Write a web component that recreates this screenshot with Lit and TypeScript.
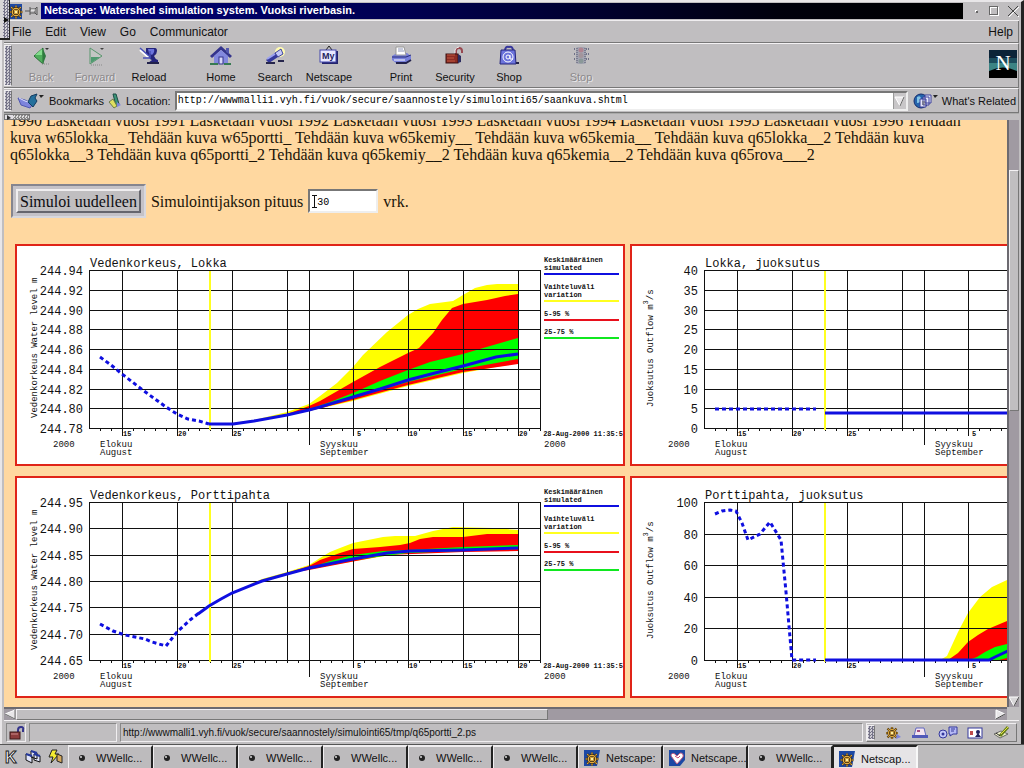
import { LitElement, html, svg, css } from "lit";
import { customElement, property } from "lit/decorators.js";

type Pt = [number, number];

interface ChartSpec {
  title: string;
  unit: string;
  cubic?: boolean;
  ticks: string[];
  observed: Pt[];
  simulated: Pt[];
  yellow?: Pt[];
  red?: Pt[];
  green?: Pt[];
}

const LEFT = 89;
const RIGHT = 540;
const TOP = 270;
const BOTTOM = 428;
const DAY = 11;

const pts = (list: Pt[]) => list.map((p) => p.join(",")).join(" ");

const CHARTS: ChartSpec[] = [
  {
    title: "Vedenkorkeus, Lokka",
    unit: "Vedenkorkeus Water level m",
    ticks: ["244.94", "244.92", "244.90", "244.88", "244.86", "244.84", "244.82", "244.80", "244.78"],
    observed: [[100, 357], [111, 365], [122, 374], [144, 391], [166, 407], [177, 414], [188, 419], [199, 421], [209, 424]],
    simulated: [[209, 424], [233, 424], [254, 421], [287, 415], [309, 410], [320, 407], [353, 397], [380, 389], [408, 380], [435, 373], [463, 366], [496, 357], [518, 354]],
    yellow: [[232, 423], [254, 420], [287, 412], [309, 404], [320, 396], [337, 383], [353, 367], [363, 355], [387, 332], [408, 315], [418, 309], [430, 304], [453, 301], [463, 295], [475, 288], [487, 285], [497, 284], [518, 284], [518, 363], [463, 373], [408, 386], [353, 401], [309, 411], [254, 422]],
    red: [[250, 422], [287, 414], [309, 406], [320, 401], [353, 382], [380, 367], [408, 353], [419, 348], [433, 333], [442, 320], [452, 308], [463, 304], [487, 300], [505, 296], [518, 294], [518, 364], [463, 372], [408, 385], [353, 400], [309, 411]],
    green: [[309, 409], [330, 402], [353, 393], [380, 381], [408, 370], [430, 362], [463, 354], [490, 346], [518, 338], [518, 359], [463, 369], [408, 382], [353, 398]],
  },
  {
    title: "Lokka, juoksutus",
    unit: "Juoksutus Outflow m",
    cubic: true,
    ticks: ["40", "35", "30", "25", "20", "15", "10", "5", "0"],
    observed: [[100, 409], [201, 409]],
    simulated: [[210, 413], [518, 413]],
  },
  {
    title: "Vedenkorkeus, Porttipahta",
    unit: "Vedenkorkeus Water level m",
    ticks: ["244.95", "244.90", "244.85", "244.80", "244.75", "244.70", "244.65"],
    observed: [[100, 392], [113, 399], [125, 403], [145, 407], [152, 410], [166, 414], [177, 400], [190, 388], [199, 381]],
    simulated: [[198, 382], [209, 374], [221, 367], [232, 361], [262, 349], [287, 342], [309, 336], [353, 327], [387, 321], [410, 319], [463, 318], [518, 316]],
    yellow: [[250, 352], [262, 347], [287, 340], [309, 333], [320, 326], [330, 320], [340, 316], [353, 311], [383, 305], [395, 304], [415, 304], [433, 299], [453, 295], [493, 296], [518, 298], [518, 318], [408, 320], [309, 337]],
    red: [[287, 341], [309, 334], [320, 328], [340, 321], [353, 317], [380, 315], [400, 313], [410, 311], [420, 307], [433, 305], [463, 305], [487, 302], [518, 302], [518, 319], [463, 320], [387, 323], [309, 338]],
    green: [[309, 336], [330, 329], [353, 323], [383, 319], [408, 318], [463, 315], [518, 313], [518, 317], [408, 321], [353, 328]],
  },
  {
    title: "Porttipahta, juoksutus",
    unit: "Juoksutus Outflow m",
    cubic: true,
    ticks: ["100", "80", "60", "40", "20", "0"],
    observed: [[100, 282], [107, 279], [115, 278], [121, 279], [127, 291], [133, 308], [145, 302], [155, 290], [166, 308], [171, 360], [177, 428], [201, 428]],
    simulated: [[210, 428], [374, 428], [380, 425], [393, 419], [410, 412], [463, 400], [518, 392]],
    yellow: [[325, 428], [332, 424], [343, 400], [353, 381], [365, 365], [377, 355], [392, 348], [420, 342], [518, 336], [518, 428]],
    red: [[333, 428], [343, 421], [353, 410], [363, 403], [373, 397], [392, 389], [430, 378], [518, 366], [518, 428]],
    green: [[354, 428], [362, 425], [370, 420], [380, 415], [392, 412], [430, 404], [518, 386], [518, 420], [392, 426], [384, 428]],
  },
];

@customElement("level-chart")
class LevelChart extends LitElement {
  @property({ attribute: false }) spec!: ChartSpec;

  static styles = css`
    :host { display: block; }
    svg { display: block; width: 606px; height: 218px; }
    text { font-family: "Liberation Mono", monospace; fill: #111; }
    .axis { font-size: 12px; text-anchor: end; }
    .title { font-size: 12px; }
    .mid { font-size: 9px; }
    .tiny { font-size: 7px; font-weight: bold; }
    .stamp { text-anchor: end; }
    .grid { stroke: #111; stroke-width: 1; shape-rendering: crispEdges; }
    .now { stroke: #ffff20; stroke-width: 2; }
    .line { stroke: #0f0fe0; stroke-width: 3; fill: none; }
    .dots { stroke: #0f0fe0; stroke-width: 3; fill: none; stroke-dasharray: 4 3; }
    .y { fill: #ffff00; }
    .r { fill: #ff0000; }
    .g { fill: #00ff00; }
  `;

  render() {
    const s = this.spec;
    const step = (BOTTOM - TOP) / (s.ticks.length - 1);
    const rows = s.ticks.map((label, i) => ({ label, y: Math.round(TOP + i * step) }));
    const cols = [3, 8, 13, 18, 24, 29, 34, 39].map((d) => LEFT + d * DAY);
    const marks: [number, string][] = [[3, "15"], [8, "20"], [13, "25"], [24, "5"], [29, "10"], [34, "15"], [39, "20"]];
    const days = Array.from({ length: 41 }, (_, i) => LEFT + (i + 1) * DAY);
    const legend: [string, string, number, string][] = [
      ["Keskimääräinen", "simulated", 274, "#0f0fe0"],
      ["Vaihteluväli", "variation", 301, "#ffff20"],
      ["", "5-95 %", 320, "#e8101c"],
      ["", "25-75 %", 338, "#10e820"],
    ];
    return html`<svg viewBox="17 246 606 218" role="img" aria-label=${s.title}>
      ${s.yellow ? svg`<polygon class="y" points=${pts(s.yellow)} />` : ""}
      ${s.red ? svg`<polygon class="r" points=${pts(s.red)} />` : ""}
      ${s.green ? svg`<polygon class="g" points=${pts(s.green)} />` : ""}
      ${rows.map((r) => svg`
        <line class="grid" x1=${LEFT} x2=${RIGHT} y1=${r.y + 0.5} y2=${r.y + 0.5} />
        <text class="axis" x="83" y=${r.y + 5}>${r.label}</text>`)}
      <line class="grid" x1="89.5" x2="89.5" y1=${TOP} y2=${BOTTOM} />
      <line class="grid" x1="540.5" x2="540.5" y1=${TOP} y2=${BOTTOM + 2} />
      ${cols.map((x) => svg`<line class="grid" x1=${x + 0.5} x2=${x + 0.5} y1=${TOP} y2=${x === 287 ? BOTTOM : BOTTOM + 8} />`)}
      <line class="grid" x1="309.5" x2="309.5" y1=${TOP} y2=${BOTTOM + 17} />
      ${days.map((x) => svg`<line class="grid" x1=${x + 0.5} x2=${x + 0.5} y1=${BOTTOM} y2=${BOTTOM + 3} />`)}
      <line class="now" x1="210" x2="210" y1=${TOP + 1} y2=${BOTTOM + 2} />
      <polyline class="dots" points=${pts(s.observed)} />
      <polyline class="line" points=${pts(s.simulated)} />
      ${marks.map(([d, t]) => svg`<text class="tiny" x=${LEFT + d * DAY + (t.length < 2 ? 4 : 1)} y=${BOTTOM + 8}>${t}</text>`)}
      <text class="title" x="90" y="267">${s.title}</text>
      <text class="mid" transform="translate(${s.cubic ? 38 : 37} ${s.cubic ? 407 : 418}) rotate(-90)">${s.unit}${s.cubic ? svg`<tspan font-size="7" dy="-5">3</tspan><tspan dy="5">/s</tspan>` : ""}</text>
      <text class="mid" x="53" y="447">2000</text>
      <text class="mid" x="100" y="447">Elokuu</text>
      <text class="mid" x="100" y="455">August</text>
      <text class="mid" x="320" y="447">Syyskuu</text>
      <text class="mid" x="320" y="455">September</text>
      <text class="mid" x="544" y="447">2000</text>
      <text class="tiny stamp" x="623" y="436">28-Aug-2000 11:35:5</text>
      ${legend.map(([a, b, y, c]) => svg`
        <text class="tiny" x="544" y=${y - 12}>${a}</text>
        <text class="tiny" x="544" y=${y - 4}>${b}</text>
        <line x1="544" x2="619" y1=${y} y2=${y} stroke=${c} stroke-width="2" />`)}
    </svg>`;
  }
}

const wheel = (x: number, y: number, s: number) => svg`<g transform="translate(${x} ${y}) scale(${s})">
  <g stroke="#3b2a10" stroke-width="3"><path d="M0-8V8M-8 0H8M-6-6L6 6M-6 6L6-6" /></g>
  <g stroke="#e8b040" stroke-width="1.4"><path d="M0-8V8M-8 0H8M-6-6L6 6M-6 6L6-6" /></g>
  <circle r="4.6" fill="none" stroke="#3b2a10" stroke-width="3" /><circle r="4.6" fill="none" stroke="#e8b040" stroke-width="1.5" />
  <circle r="1.6" fill="#fff0a0" /></g>`;

const ICONS: Record<string, unknown> = {
  Back: svg`<path d="M5 11L14 3V19Z" fill="#4fae5c" stroke="#2c7038" /><path d="M6 10L13 4V10Z" fill="#83dc8c" /><path d="M14 4L17 11L14 19Z" fill="#2f7a40" /><path d="M16 3H20L18 5Z" fill="#333" /><path d="M13 19H20" stroke="#888" stroke-dasharray="1 1" />`,
  Forward: svg`<path d="M7 3V19L19 11Z" fill="#c4c6c4" stroke="#58966c" /><path d="M8 12H17L8 18Z" fill="#4f9a70" /><path d="M17 3H21L19 5Z" fill="#444" /><path d="M8 20H20" stroke="#888" stroke-dasharray="1 1" />`,
  Reload: svg`<path d="M9 3H18Q20 3 20 6Q20 9 17 11Q18 14 21 15V18H11L15 15Q12 14 12 11L9 8Z" fill="#25257c" /><path d="M11 4H17Q18 7 15 10L12 8Z" fill="#6c74dc" /><path d="M3 5L11 12" stroke="#fff" stroke-width="2" /><path d="M3 3L12 11M6 13H13V6" stroke="#4850b8" stroke-width="1.500" fill="none" /><path d="M10 18H22" stroke="#22224c" stroke-width="2" />`,
  Home: svg`<path d="M2 12L12 3L22 12" fill="none" stroke="#34348c" stroke-width="3" /><path d="M5 11L12 5L19 11V19H5Z" fill="#8288de" /><path d="M17 3H20V9L17 7Z" fill="#5358ae" /><rect x="10" y="12" width="4" height="7" fill="#d8d8f8" stroke="#34348c" /><path d="M1 19H9M15 19H22" stroke="#367a52" stroke-width="2" />`,
  Search: svg`<circle cx="17" cy="7" r="5" fill="#fffbb0" /><path d="M12 8L18 4L20 9L15 12Z" fill="#c4c8f8" stroke="#40449c" /><path d="M3 15L12 8L15 12L6 18Z" fill="#34389c" /><path d="M4 14L12 9" stroke="#9ca2f0" stroke-width="2" /><path d="M3 18H12M15 16H21" stroke="#26264c" stroke-width="2" />`,
  Netscape: svg`<path d="M12 1L9 5M12 1L15 5" stroke="#222" /><rect x="5" y="6" width="16" height="13" fill="#23236c" /><rect x="3" y="5" width="16" height="12" fill="#e8e8ff" stroke="#4548ac" /><text x="5" y="14" font-size="9" font-weight="bold" font-family="Liberation Sans, sans-serif" fill="#222260">My</text>`,
  Print: svg`<path d="M3 11L8 8H18L22 11V15L17 18H7L3 15Z" fill="#7880da" /><path d="M7 2H15L17 10H7Z" fill="#fff" stroke="#999" /><path d="M9 4H14M9 6H15" stroke="#8d94b8" /><path d="M3 12H17L22 10" stroke="#272c7c" fill="none" /><path d="M5 15H16" stroke="#fff" /><path d="M7 18H17L22 15" stroke="#22224c" stroke-width="2" fill="none" />`,
  Security: svg`<path d="M13 9V6Q13 3 16 3T19 6V8" stroke="#984850" stroke-width="2" fill="none" /><path d="M12 8V5Q13 2 16 2" stroke="#eee" fill="none" /><rect x="3" y="9" width="12" height="9" fill="#8c2c24" stroke="#3c1010" /><path d="M4 10H12M4 13H11M4 16H12" stroke="#c05840" /><path d="M15 9L18 11V17L15 18Z" fill="#2c2c60" />`,
  Shop: svg`<path d="M8 6Q8 1 12 2Q16 1 16 6" fill="none" stroke="#38389c" stroke-width="2" /><path d="M4 5H18L19 19H3Z" fill="#6c74dc" stroke="#24247c" /><path d="M19 18H22" stroke="#22224c" stroke-width="2" /><circle cx="11" cy="12" r="5" fill="#6c74dc" stroke="#fff" /><circle cx="11" cy="12" r="2" fill="none" stroke="#fff" /><path d="M13 10V14H16" stroke="#fff" fill="none" />`,
  Stop: svg`<rect x="7" y="2" width="10" height="17" rx="2" fill="#a4a5b2" /><path d="M5 4H7M5 9H7M5 14H7M17 4H20M17 9H20M17 14H20" stroke="#6f7188" stroke-width="2" stroke-dasharray="1 1" /><circle cx="12" cy="5" r="2.500" fill="#b08490" /><circle cx="12" cy="10.500" r="2.500" fill="#a3959c" /><circle cx="12" cy="16" r="2.500" fill="#8a9898" /><path d="M8 3V18M16 3V18" stroke="#555970" stroke-dasharray="1 1" />`,
};

const icon = (w: number, h: number, body: unknown) =>
  html`<svg class="icon" width=${w} height=${h} viewBox="0 0 ${w} ${h}" aria-hidden="true">${body}</svg>`;

@customElement("app-root")
class AppRoot extends LitElement {
  static styles = css`
    :host {
      display: flex; flex-direction: column; position: relative; box-sizing: border-box; width: 100%; height: 100vh; overflow: hidden;
      background: #c0bec0; color: #111;
      font: 11px/14px "Liberation Sans", Arial, sans-serif;
    }
    * { box-sizing: border-box; }
    button { font: inherit; color: inherit; background: none; border: 0; padding: 0; margin: 0; }
    a { color: inherit; text-decoration: none; }
    .icon { display: block; flex: none; }
    .window { flex: 1; min-height: 0; display: flex; flex-direction: column; border: solid #e8e6e8; border-width: 2px 0 0 2px; border-right: 3px solid #222; padding: 0 2px 0 2px; }
    .title { display: flex; align-items: center; height: 19px; padding: 1px 0 1px 5px; border-bottom: 1px solid #efedef; gap: 2px; }
    .title h1 { flex: 1; margin: 0 6px 0 0; padding-left: 3px; height: 16px; font-size: 11px; line-height: 15px; color: #fff; background: linear-gradient(90deg, #00007c, #000050 40%, #00000c 80%, #000); white-space: nowrap; overflow: hidden; }
    .title .controls { display: flex; gap: 8px; }
    .menu { display: flex; gap: 14px; height: 22px; padding: 0 5px 0 8px; align-items: center; font-size: 12px; border-bottom: 1px solid #777; border-right: 1px solid #777; }
    .menu .help { margin-left: auto; }
    .bar { display: flex; align-items: center; border-top: 1px solid #f4f2f4; border-bottom: 1px solid #777; border-right: 1px solid #777; }
    .grip { align-self: stretch; width: 8px; margin: 1px 0; flex: none; border: 1px solid #f0eef0; border-right-color: #777; background: repeating-conic-gradient(#77758a 0 25%, #cfcdd4 0 50%) 0 0 / 3px 3px; }
    .tools { height: 45px; }
    .group { display: flex; margin-left: 18px; }
    .grip + .group { margin-left: 2px; }
    .tool { width: 54px; display: flex; flex-direction: column; align-items: center; gap: 4px; padding: 0 0 3px; }
    .off { color: #8b898b; text-shadow: 1px 1px #e8e6e8; }
    .logo { margin: 0 1px 4px auto; }
    .loc { height: 25px; gap: 4px; padding-right: 2px; }
    .mark { display: flex; align-items: center; gap: 4px; padding-left: 1px; }
    .url { flex: 1; display: flex; height: 20px; border: 2px solid; border-color: #777 #eee #eee #777; background: #fff; }
    .url input { flex: 1; min-width: 0; border: 0; outline: 0; padding: 0 1px; background: #fff; font: 10px/16px "Liberation Mono", monospace; color: #000; }
    .drop { width: 13px; background: #c8c6c8; border-left: 1px solid #999; }
    .strip { height: 7px; display: flex; background: #c0bec0; border-top: 1px solid #aaa; }
    .tab { width: 26px; border: 1px solid #777; background: linear-gradient(90deg, #e0dee4 8px, transparent 8px), repeating-conic-gradient(#888 0 25%, #ddd 0 50%) 0 0 / 3px 3px; }
    .view { flex: 1; min-height: 0; display: grid; grid-template-columns: minmax(0, 1fr) 12px; grid-template-rows: minmax(0, 1fr) 13px; }
    .page { overflow: hidden; background: #ffd8a0; padding: 0 6px; font: 16px/17px "Liberation Serif", "Times New Roman", serif; color: #1a1408; }
    .log { margin: -8px 0 0; white-space: nowrap; }
    .form { display: flex; align-items: center; gap: 5px; margin: 21px 0 26px 1px; }
    .ring { display: block; border: 2px solid; border-color: #85858f #d8d8de #d8d8de #85858f; padding: 3px; background: #c4c2c8; }
    .ring button { display: block; height: 24px; padding: 0 2px; background: #c0bec0; border: 2px solid; border-color: #f0eef0 #66666e #66666e #f0eef0; color: #0c0c10; white-space: nowrap; }
    .field { position: relative; display: flex; }
    .beam { position: absolute; left: 4px; top: 6px; }
    .days { width: 70px; height: 24px; border: 2px solid; border-color: #777 #eee #eee #777; background: #fff; padding: 2px 7px 0; font: 10px/16px "Liberation Mono", monospace; outline: 0; }
    .charts { display: grid; grid-template-columns: 610px 610px; column-gap: 5px; row-gap: 10px; padding-left: 5px; }
    .panel { border: 2px solid #e02418; background: #fff; overflow: hidden; }
    .vbar { background: #a09aa2; border-left: 2px solid #6c6a70; display: flex; flex-direction: column; }
    .hbar { background: #a09aa2; border-top: 2px solid #6c6a70; display: flex; }
    .arrow { flex: none; display: block; }
    .vthumb { flex: 0 0 41%; margin-top: 50px; border: 1px solid; border-color: #f4f2f4 #777 #777 #f4f2f4; background: #c0bec0; }
    .hthumb { flex: 0 0 53%; border: 1px solid; border-color: #f4f2f4 #777 #777 #f4f2f4; background: #c0bec0; }
    .push { margin-top: auto; }
    .pushx { margin-left: auto; }
    .status { display: flex; align-items: stretch; height: 24px; padding: 2px; gap: 3px; border-top: 1px solid #f4f2f4; }
    .sunk { border: 1px solid; border-color: #888 #f0eef0 #f0eef0 #888; display: flex; align-items: center; padding-left: 2px; white-space: nowrap; overflow: hidden; }
    .blank { width: 88px; }
    .msg { flex: 1; font-size: 10px; }
    .dock { display: flex; align-items: center; gap: 9px; border: 1px solid; border-color: #f0eef0 #777 #777 #f0eef0; padding-right: 6px; }
    .tasks { display: flex; height: 24px; flex: none; border-top: 1px solid #555; background: #bdbbbd; }
    .quick { display: flex; width: 68px; justify-content: space-around; align-items: center; }
    .task { display: flex; align-items: center; width: 85px; gap: 6px; padding-left: 5px; border: solid; border-width: 2px 2px 0 1px; border-color: #f0eef0 #222 #222 #f0eef0; white-space: nowrap; overflow: hidden; }
    .task.on { background: #e6e4e6; border-color: #222 #f8f8f8 #f8f8f8 #222; padding-top: 2px; }
    .handle { position: absolute; left: 0; top: 0; width: 10px; height: 40px; border: solid #222; border-width: 0 1px 2px 0; background: linear-gradient(90deg, #d8d6d8 3px, transparent 3px), repeating-conic-gradient(#77758a 0 25%, #d8d6dc 0 50%) 0 0 / 3px 3px; }
  `;

  private tool(name: string, off = false) {
    return html`<button class="tool ${off ? "off" : ""}">${icon(24, 21, ICONS[name])}<span>${name}</span></button>`;
  }

  private task(kind: string, label: string, on = false) {
    const body =
      kind === "dot"
        ? svg`<circle cx="8" cy="8" r="3" fill="#222" /><circle cx="7" cy="7" r="1" fill="#ddd" />`
        : kind === "heart"
          ? svg`<rect width="16" height="16" fill="#1c48a4" /><path d="M8 14L2 6Q2 2 6 4L8 6L11 3Q15 3 14 7Z" fill="#fff" stroke="#c05880" /><path d="M6 6L9 8L11 6" stroke="#d04870" fill="none" /><path d="M11 16L16 10V16Z" fill="#bdbbbd" />`
          : svg`<path d="M0 0H16L13 16H0Z" fill="#1c48a4" />${wheel(8, 9, 0.8)}`;
    return html`<button class="task ${on ? "on" : ""}">${icon(16, 16, body)}<span>${label}</span></button>`;
  }

  render() {
    return html`
      <main class="window">
        <header class="title">
          ${icon(14, 15, svg`<rect width="13" height="15" fill="#1c48a4" />${wheel(7, 8, 0.8)}`)}
          ${icon(14, 12, svg`<path d="M0 6H5M5 2V10M5 4H10V8H5M12 2V10M10 4L12 2M10 8L12 10" stroke="#555" fill="none" /><path d="M6 5H10" stroke="#fff" />`)}
          <h1>Netscape: Watershed simulation system. Vuoksi riverbasin.</h1>
          <div class="controls">
            <button aria-label="Minimize">${icon(10, 12, svg`<rect x="4" y="5" width="2" height="2" fill="#fff" /><rect x="5" y="6" width="2" height="2" fill="#666" />`)}</button>
            <button aria-label="Maximize">${icon(10, 12, svg`<rect x="1.500" y="2.500" width="8" height="8" fill="none" stroke="#fff" /><rect x="0.500" y="1.500" width="8" height="8" fill="none" stroke="#666" />`)}</button>
            <button aria-label="Close">${icon(12, 12, svg`<path d="M2 2L12 12M12 2L2 12" stroke="#fff" /><path d="M1 1L11 11M11 1L1 11" stroke="#444" />`)}</button>
          </div>
        </header>
        <nav class="menu">
          <button>File</button><button>Edit</button><button>View</button><button>Go</button><button>Communicator</button>
          <button class="help">Help</button>
        </nav>
        <div class="bar tools">
          <div class="grip"></div>
          <div class="group">${this.tool("Back", true)}${this.tool("Forward", true)}${this.tool("Reload")}</div>
          <div class="group">${this.tool("Home")}${this.tool("Search")}${this.tool("Netscape")}</div>
          <div class="group">${this.tool("Print")}${this.tool("Security")}${this.tool("Shop")}</div>
          <div class="group">${this.tool("Stop", true)}</div>
          <a class="logo" href="#" aria-label="Netscape home">${icon(28, 28, svg`
            <rect width="28" height="28" fill="#0c2438" /><rect y="8" width="28" height="6" fill="#1c4c5c" /><rect y="13" width="28" height="8" fill="#3c8484" />
            <path d="M0 21Q14 14 28 21V28H0Z" fill="#000" />
            <text x="14" y="20" text-anchor="middle" font-size="21" font-family="Liberation Serif, serif" fill="#fff">N</text>`)}</a>
        </div>
        <div class="bar loc">
          <div class="grip"></div>
          <button class="mark">${icon(28, 16, svg`<path d="M1 5L4 12L13 15L18 8L12 9L8 7Z" fill="#7c84dc" stroke="#5058b0" /><path d="M2 5L8 8L12 9" stroke="#dfe2ff" fill="none" /><path d="M11 9L14 3L20 1L18 5L20 8L16 14Z" fill="#24709c" stroke="#143c60" /><path d="M22 2H27L24 5Z" fill="#222" />`)}Bookmarks</button>
          ${icon(14, 16, svg`<path d="M5 1H8L11 11L8 13Z" fill="#3c9478" stroke="#1c4c44" /><path d="M1 9L5 6L9 13L6 15Z" fill="#dfe060" stroke="#6c7c4c" /><path d="M9 9L13 12L9 14Z" fill="#7c84dc" />`)}
          <label for="url">Location:</label>
          <div class="url">
            <input id="url" type="text" value="http://wwwmalli1.vyh.fi/vuok/secure/saannostely/simulointi65/saankuva.shtml" />
            <button class="drop" aria-label="History">${icon(12, 16, svg`<path d="M1 4H10L6 13Z" fill="#e8e6e8" stroke="#fff" /><path d="M10 4L6 13" stroke="#666" />`)}</button>
          </div>
          <button class="mark">${icon(25, 16, svg`<circle cx="8" cy="8" r="7" fill="#2464ac" stroke="#142c6c" /><path d="M4 4Q8 2 8 6T4 10Z" fill="#84c4e4" /><path d="M12 2H18V10H12ZM10 4H16V12H10ZM7 6H13V14H7Z" fill="#e4e6f8" stroke="#3c409c" /><path d="M9 9H12M9 11H12" stroke="#666" /><path d="M20 2H25L22 5Z" fill="#222" />`)}What's Related</button>
        </div>
        <div class="strip"><div class="tab">${icon(7, 5, svg`<path d="M2 0L6 3L2 5Z" fill="#333" />`)}</div></div>

        <section class="view">
          <article class="page">
            <p class="log">
              1990 Lasketaan vuosi 1991 Lasketaan vuosi 1992 Lasketaan vuosi 1993 Lasketaan vuosi 1994 Lasketaan vuosi 1995 Lasketaan vuosi 1996 Tehdään<br />
              kuva w65lokka__ Tehdään kuva w65portti_ Tehdään kuva w65kemiy__ Tehdään kuva w65kemia__ Tehdään kuva q65lokka__2 Tehdään kuva<br />
              q65lokka__3 Tehdään kuva q65portti_2 Tehdään kuva q65kemiy__2 Tehdään kuva q65kemia__2 Tehdään kuva q65rova___2
            </p>
            <form class="form" @submit=${(e: Event) => e.preventDefault()}>
              <span class="ring"><button>Simuloi uudelleen</button></span>
              <label for="days">Simulointijakson pituus</label>
              <span class="field">
                <input class="days" id="days" type="text" value="30" />
                <svg class="beam" width="5" height="13" viewBox="0 0 5 13" aria-hidden="true"><path d="M0 0.5H5M2.500 0V13M0 12.500H5" stroke="#111" /></svg>
              </span>
              <span>vrk.</span>
            </form>
            <div class="charts">
              ${CHARTS.map((c) => html`<div class="panel"><level-chart .spec=${c}></level-chart></div>`)}
            </div>
          </article>
          <div class="vbar">
            <div class="vthumb"></div>
            <svg class="arrow push" width="10" height="11" viewBox="0 0 10 11"><path d="M0 1H10L5 10Z" fill="#d8d6d8" stroke="#fff" /><path d="M10 1L5 10" stroke="#444" /></svg>
          </div>
          <div class="hbar">
            <svg class="arrow" width="12" height="11" viewBox="0 0 12 11"><path d="M1 5L11 1V10Z" fill="#e8e6e8" stroke="#fff" /><path d="M1 5L11 10V1" fill="none" stroke="#666" /></svg>
            <div class="hthumb"></div>
            <svg class="arrow pushx" width="12" height="11" viewBox="0 0 12 11"><path d="M1 1V10L10 5Z" fill="#e8e6e8" stroke="#fff" /><path d="M1 10L10 5" stroke="#444" /></svg>
          </div>
          <div></div>
        </section>

        <footer class="status">
          <div class="sunk">${icon(16, 16, svg`<path d="M9 8V5Q9 2 12 2T14 5V7" stroke="#34348c" stroke-width="2" fill="none" /><rect x="1" y="7" width="10" height="7" fill="#8c3c3c" stroke="#3c1818" /><path d="M2 9H9" stroke="#c88" />`)}</div>
          <div class="sunk blank"></div>
          <div class="sunk msg">http://wwwmalli1.vyh.fi/vuok/secure/saannostely/simulointi65/tmp/q65portti_2.ps</div>
          <nav class="dock">
            <div class="grip"></div>
            <button aria-label="Navigator">${icon(18, 14, svg`${wheel(8, 7, 0.75)}<path d="M13 8L17 11L12 13" fill="#7c84dc" />`)}</button>
            <button aria-label="Mail">${icon(18, 14, svg`<path d="M3 10L5 2H13L15 10Z" fill="#f4e4f0" stroke="#6068c0" /><path d="M6 4H9V6H6Z" fill="#a04c80" /><path d="M1 9H17V12H1Z" fill="#5058b8" />`)}</button>
            <button aria-label="Discussions">${icon(20, 14, svg`<path d="M11 1H19V8H15L12 10V8H11Z" fill="#b4b8f4" stroke="#34389c" /><path d="M13 3H17M13 5H16" stroke="#34389c" /><circle cx="5" cy="8" r="4" fill="#c4c8f8" stroke="#34389c" /><circle cx="5" cy="8" r="1.500" fill="#34389c" />`)}</button>
            <button aria-label="Address book">${icon(16, 14, svg`<rect x="1" y="2" width="14" height="10" fill="#fff" stroke="#34389c" /><rect x="3" y="5" width="3" height="4" fill="#c04c4c" /><circle cx="11" cy="6" r="2" fill="#222260" /><path d="M8 11L11 7L14 11Z" fill="#222260" />`)}</button>
            <button aria-label="Composer">${icon(18, 14, svg`<path d="M2 8L8 12L16 8L9 5Z" fill="#f4f4d0" stroke="#666" /><path d="M16 1L8 10" stroke="#66801c" stroke-width="3" /><path d="M16 1L9 8" stroke="#e8e040" /><path d="M8 10L4 7" stroke="#222" />`)}</button>
          </nav>
        </footer>
      </main>
      <nav class="tasks">
        <div class="quick">
          <button aria-label="Menu">${icon(14, 18, svg`<text x="1" y="15" font-size="16" font-weight="bold" font-family="Liberation Sans, sans-serif" fill="#fff" stroke="#222" stroke-width="1">K</text>`)}</button>
          <button aria-label="Windows">${icon(16, 16, svg`<path d="M6 2L12 4V10L6 8ZM9 5L15 7V13L9 11ZM1 5L7 7V14L1 11Z" fill="#dfe4fa" stroke="#111" /><path d="M1 5L7 7M6 2L12 4M9 5L15 7" stroke="#24389c" stroke-width="2" />`)}</button>
          <button aria-label="Disconnect">${icon(16, 16, svg`<path d="M4 1H9L7 5H11L3 14L5 8H1Z" fill="#f4ec30" stroke="#222" /><path d="M9 5L14 7V14L9 12Z" fill="#d4a85c" stroke="#222" />`)}</button>
        </div>
        ${[0, 1, 2, 3, 4, 5].map(() => this.task("dot", "WWellc..."))}
        ${this.task("wheel", "Netscape:")}
        ${this.task("heart", "Netscape...")}
        ${this.task("dot", "WWellc...")}
        ${this.task("wheel", "Netscap...", true)}
      </nav>
      <div class="handle">${icon(9, 40, svg`<path d="M4 17L9 20L4 23Z" fill="#111" />`)}</div>
    `;
  }
}
